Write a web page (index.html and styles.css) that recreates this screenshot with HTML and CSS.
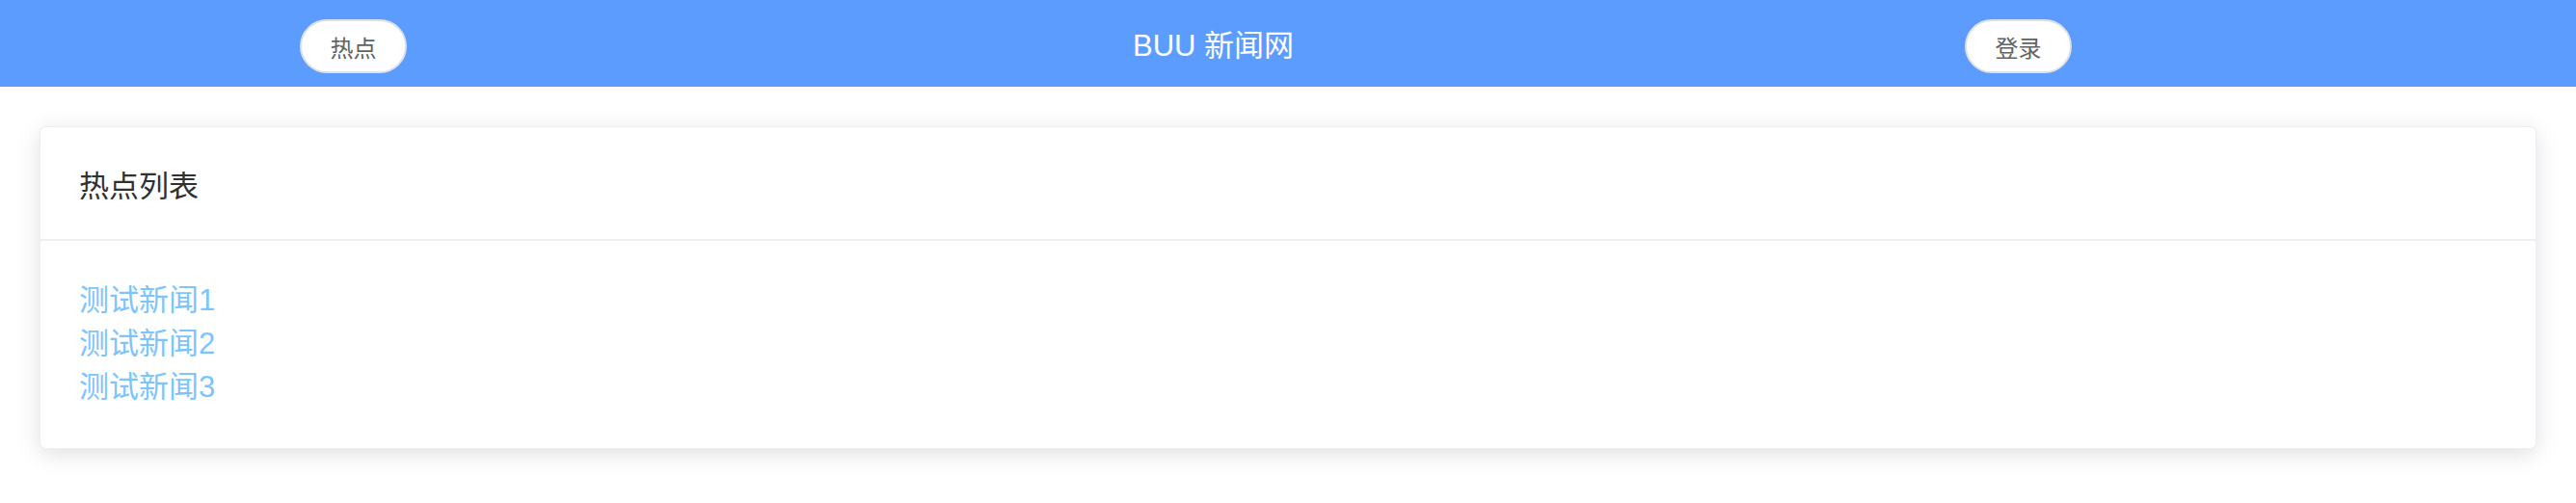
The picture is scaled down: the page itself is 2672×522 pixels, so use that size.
FILE: index.html
```html
<!DOCTYPE html>
<html lang="zh-CN">
<head>
<meta charset="utf-8">
<title>BUU 新闻网</title>
<link rel="stylesheet" href="styles.css">
</head>
<body>
<header class="topbar">
  <button class="pill pill-hot">热点</button>
  <div class="brand">BUU 新闻网</div>
  <button class="pill pill-login">登录</button>
</header>
<main class="content">
  <section class="card">
    <div class="card-header">热点列表</div>
    <div class="card-body">
      <a class="news-link" href="#">测试新闻1</a>
      <a class="news-link" href="#">测试新闻2</a>
      <a class="news-link" href="#">测试新闻3</a>
    </div>
  </section>
</main>
</body>
</html>
```

FILE: styles.css
```css
html, body {
  margin: 0;
  padding: 0;
  background: #ffffff;
  font-family: "Liberation Sans", Arial, "Noto Sans CJK SC", sans-serif;
}

.topbar {
  height: 90px;
  background: #5c9cff;
  display: flex;
  align-items: center;
  padding-left: 311px;
  box-sizing: border-box;
}

.pill {
  width: 111px;
  height: 56px;
  border: 2px solid #dcdfe6;
  border-radius: 28px;
  background: #ffffff;
  color: #606266;
  font-family: "Liberation Sans", "Noto Sans CJK SC", sans-serif;
  font-size: 24px;
  padding: 0;
  margin-top: 6px;
  box-sizing: border-box;
  display: flex;
  align-items: center;
  justify-content: center;
}

.brand {
  margin-left: 753px;
  width: 172px;
  color: #ffffff;
  font-size: 31px;
  white-space: nowrap;
  margin-top: -2px;
}

.pill-login {
  margin-left: 691px;
}

.content {
  padding: 41px 41px 57px 41px;
}

.card {
  border: 1px solid #ebeef5;
  border-radius: 7px;
  background: #ffffff;
  box-shadow: 0 5px 24px 0 rgba(0, 0, 0, 0.13);
}

.card-header {
  height: 118px;
  box-sizing: border-box;
  border-bottom: 2px solid #ebeef5;
  display: flex;
  align-items: center;
  padding: 0 40px;
  font-size: 31px;
  color: #303133;
  font-family: "Noto Sans CJK SC", sans-serif;
}

.card-body {
  padding: 39px 40px 41px 40px;
  display: flex;
  flex-direction: column;
}

.news-link {
  font-size: 31px;
  line-height: 45px;
  color: #7dc4fd;
  text-decoration: none;
  font-family: "Liberation Sans", "Noto Sans CJK SC", sans-serif;
}
```
